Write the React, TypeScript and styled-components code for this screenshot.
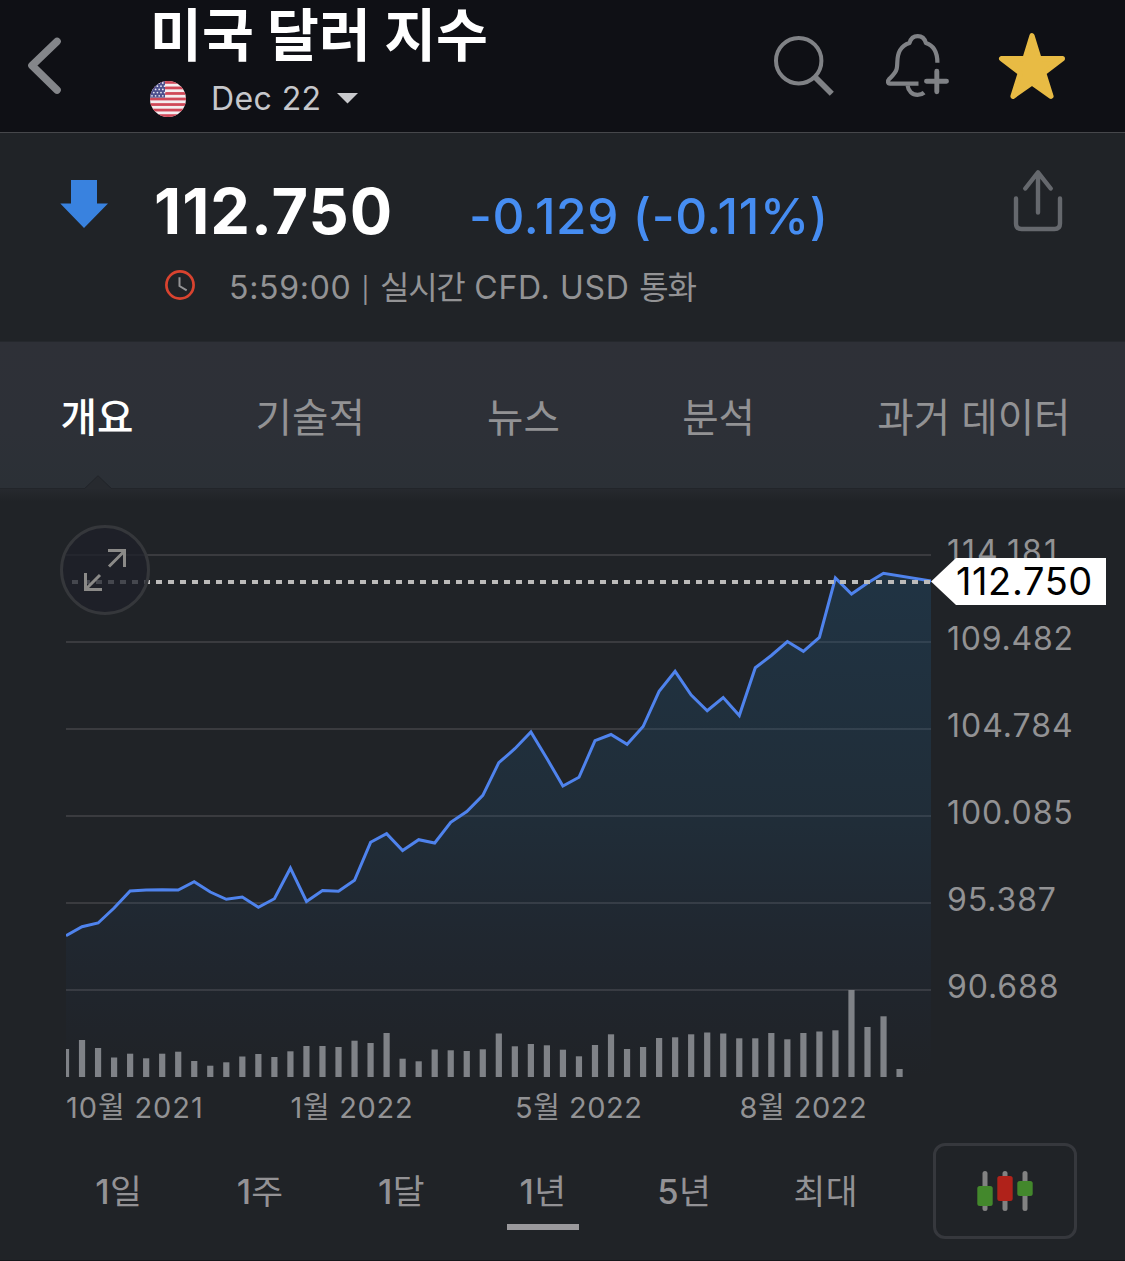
import React from "react";
import styled, { createGlobalStyle } from "styled-components";

const GlobalStyle = createGlobalStyle`
  * { box-sizing: border-box; }
  body {
    margin: 0;
    background: #202327;
    font-family: Inter, "Noto Sans CJK KR", sans-serif;
    -webkit-font-smoothing: antialiased;
  }
  button {
    margin: 0;
    padding: 0;
    border: 0;
    background: none;
    font: inherit;
    color: inherit;
  }
  svg { display: block; flex: none; }
`;

const Screen = styled.main`
  width: 1125px;
  height: 1261px;
  overflow: hidden;
  background: #202327;
  border-bottom: 1px solid #15171b;
`;

/* ---------- header ---------- */

const Header = styled.header`
  display: flex;
  height: 133px;
  padding: 0 58px 0 24px;
  background: #0f1015;
  border-bottom: 1px solid #46474b;
`;

const BackButton = styled.button`
  width: 126px;
  padding-top: 34px;
  align-self: flex-start;
`;

const Heading = styled.div`
  flex: 1;
`;

const Title = styled.h1`
  margin: 0;
  height: 70px;
  font-size: 56.4px;
  line-height: 72px;
  font-weight: 700;
  color: #fff;
  white-space: nowrap;
`;

const Contract = styled.button`
  display: flex;
  align-items: center;
  height: 58px;
  font-size: 32px;
  letter-spacing: 0.4px;
  color: #c6c7cb;
`;

const ContractName = styled.span`
  margin: -1px 16px 0 25px;
`;

const Actions = styled.div`
  display: flex;
  align-items: flex-start;
  gap: 47px;
  padding-top: 32px;
`;

/* ---------- quote ---------- */

const Quote = styled.section`
  display: flex;
  height: 208px;
  padding: 0 60px;
`;

const Direction = styled.div`
  width: 94px;
  padding-top: 47px;
`;

const QuoteBody = styled.div`
  flex: 1;
  padding-top: 38px;
`;

const PriceRow = styled.div`
  display: flex;
  align-items: baseline;
  height: 80px;
  line-height: 80px;
  white-space: nowrap;
`;

const Price = styled.span`
  width: 315px;
  font-size: 63px;
  font-weight: 700;
  letter-spacing: 1px;
  color: #fff;
`;

const Change = styled.span`
  font-size: 49.5px;
  font-weight: 500;
  letter-spacing: 0.6px;
  font-feature-settings: "calt" 0;
  color: #468df2;
`;

const Status = styled.div`
  display: flex;
  align-items: center;
  height: 40px;
  margin-top: 18px;
  padding-left: 11px;
  font-size: 32px;
  line-height: 40px;
  letter-spacing: 0.7px;
  color: #939395;
  white-space: nowrap;

  svg {
    margin-bottom: 8px;
  }
`;

const StatusText = styled.span`
  margin-left: 34px;
`;

const Hangul = styled.span`
  letter-spacing: -1.2px;
`;

const Divider = styled.span`
  font-size: 25px;
`;

const ShareButton = styled.button`
  align-self: flex-start;
  padding-top: 35px;
`;

/* ---------- tabs ---------- */

const Tabs = styled.nav`
  display: flex;
  justify-content: space-between;
  height: 148px;
  padding: 0 54.5px 0 60.5px;
  background: linear-gradient(#2e3037, #2d3037 60%, #2b3036);
  border-top: 1px solid #25282d;
  border-bottom: 1px solid #22252a;
`;

const Tab = styled.button<{ $active?: boolean }>`
  position: relative;
  height: 146px;
  font-size: 39.6px;
  line-height: 140px;
  padding-top: 6px;
  font-weight: ${(p) => (p.$active ? 500 : 400)};
  color: ${(p) => (p.$active ? "#fff" : "#929294")};
  white-space: nowrap;
`;

const TabPointer = styled.svg`
  position: absolute;
  left: 23.5px;
  bottom: -1px;
`;

/* ---------- chart ---------- */

const ChartPanel = styled.section`
  height: 642px;
  padding: 11px 0 0 66px;
  background: linear-gradient(#26292e, #202327 12px);
`;

const PlotRow = styled.div`
  position: relative;
  display: flex;
  height: 580px;
`;

const PriceAxis = styled.div`
  padding: 8px 0 0 16px;
`;

const AxisPrice = styled.div<{ $tracking: number }>`
  height: 87.1px;
  font-size: 32px;
  line-height: 87.1px;
  letter-spacing: ${(p) => p.$tracking}px;
  color: #929294;
`;

const CurrentPrice = styled.div`
  position: absolute;
  left: 865px;
  top: 58px;
  width: 175px;
  height: 47px;
  padding-left: 25px;
  background: #fff;
  clip-path: polygon(0 50%, 25px 0, 100% 0, 100% 100%, 25px 100%);
  font-size: 38px;
  line-height: 47px;
  letter-spacing: 0.6px;
  color: #000;
`;

const ExpandButton = styled.button`
  position: absolute;
  left: -6px;
  top: 25px;
  width: 90px;
  height: 90px;
  border: 3px solid #35373b;
  border-radius: 50%;
  background: rgba(30, 32, 41, 0.75);
  display: grid;
  place-items: center;
`;

const TimeAxis = styled.div`
  display: grid;
  grid-template-columns: repeat(4, 224.5px);
  height: 56px;
  font-size: 29px;
  line-height: 56px;
  color: #929294;
`;

const Month = styled.span<{ $tracking: number }>`
  letter-spacing: ${(p) => p.$tracking}px;
`;

/* ---------- range picker ---------- */

const Footer = styled.footer`
  display: flex;
  height: 130px;
  padding: 12px 48px;
`;

const Ranges = styled.div`
  display: grid;
  grid-template-columns: repeat(6, 141.4px);
  width: 885px;
`;

const Range = styled.button<{ $active?: boolean }>`
  justify-self: center;
  width: 72px;
  height: 87px;
  padding-top: 8px;
  border-bottom: 6px solid ${(p) => (p.$active ? "#9a999c" : "transparent")};
  font-size: 34.6px;
  line-height: 81px;
  font-weight: 500;
  letter-spacing: 0.3px;
  color: #939295;
  white-space: nowrap;
`;

const RangeUnit = styled.span`
  font-weight: 400;
`;

const ChartTypeButton = styled.button`
  display: grid;
  place-items: center;
  width: 144px;
  height: 96px;
  border: 3px solid #36383d;
  border-radius: 12px;
`;

/* ---------- data ---------- */

const STEP = 16.03;
const LEFT = 66;
const BASELINE = 1077;

const lineY = [
  935.7, 926.7, 923, 908, 891, 890, 889.7, 890, 881.7, 892, 899.3, 897, 907.3,
  898.7, 868.2, 901.5, 890.5, 891.3, 880.3, 842.3, 833.7, 850.5, 839.7, 843,
  822.3, 811.5, 795.3, 762.7, 748.7, 732, 758.5, 786, 777.3, 740.7, 734.5,
  744.3, 726.5, 691.3, 671.3, 695, 710.7, 697.5, 715.5, 667.7, 655.5, 641.5,
  651.3, 637.3, 578, 594, 583, 573.2,
];

const barTops = [
  1049, 1040, 1048, 1057.5, 1053.7, 1058.3, 1053.7, 1051.7, 1061, 1065.7,
  1062.3, 1056.5, 1054, 1057, 1051.3, 1046, 1046, 1047, 1040.7, 1043, 1033,
  1058.7, 1061.3, 1049.5, 1050.3, 1051, 1049.3, 1033.5, 1046.3, 1044, 1045.3,
  1049.7, 1056.3, 1045, 1034.3, 1049, 1047, 1038, 1037.3, 1034.3, 1032.5,
  1033.5, 1038.3, 1038.3, 1033, 1039.3, 1033, 1031.5, 1030.3, 990, 1027,
  1016.3, 1069,
];

const linePoints =
  lineY.map((y, i) => `${(LEFT + i * STEP).toFixed(1)},${y}`).join(" ") +
  " 931.5,581";

const gridLines = [555, 642, 729, 816, 903, 990];
const prices = [
  { value: "114.181", tracking: 2 },
  { value: "109.482", tracking: 0.75 },
  { value: "104.784", tracking: 1 },
  { value: "100.085", tracking: 0.9 },
  { value: "95.387", tracking: 0.9 },
  { value: "90.688", tracking: 0.9 },
];
const months = [
  { label: "10월 2021", tracking: 0.9 },
  { label: "1월 2022", tracking: 0.7 },
  { label: "5월 2022", tracking: 0.5 },
  { label: "8월 2022", tracking: 0.5 },
];
const ranges = [
  { count: "1", unit: "일" },
  { count: "1", unit: "주" },
  { count: "1", unit: "달" },
  { count: "1", unit: "년", active: true },
  { count: "5", unit: "년" },
  { count: "", unit: "최대" },
];
const tabs = ["개요", "기술적", "뉴스", "분석", "과거 데이터"];

/* ---------- icons ---------- */

const BackIcon = () => (
  <svg width="42" height="64" viewBox="24 34 42 64" fill="none">
    <path d="M57 41.5 32 65.5 57 90" stroke="#84868a" strokeWidth="7.6" strokeLinecap="round" strokeLinejoin="round" />
  </svg>
);

const FlagIcon = () => {
  const stripe = 36 / 13;
  const stars = [];
  for (let row = 0; row < 5; row++) {
    for (let col = 0; col < 4; col++) {
      stars.push(
        <circle key={`${row}-${col}`} cx={2 + col * 3.6 + (row % 2 ? 1.8 : 0)} cy={2 + row * 3.2} r="0.9" fill="#e4e4f0" />
      );
    }
  }
  return (
    <svg width="36" height="36" viewBox="0 0 36 36">
      <clipPath id="flag-round">
        <circle cx="18" cy="18" r="18" />
      </clipPath>
      <g clipPath="url(#flag-round)">
        <rect width="36" height="36" fill="#f4eef0" />
        {[0, 2, 4, 6, 8, 10, 12].map((n) => (
          <rect key={n} y={n * stripe} width="36" height={stripe} fill="#cf4858" />
        ))}
        <rect width="15" height={stripe * 6} fill="#4c4f8c" />
        {stars}
      </g>
    </svg>
  );
};

const CaretIcon = () => (
  <svg width="21" height="12" viewBox="0 0 21 12">
    <path d="M0 0h21L10.500 10.500z" fill="#c9cacd" />
  </svg>
);

const SearchIcon = () => (
  <svg width="65" height="68" viewBox="772 32 65 68" fill="none" stroke="#808286">
    <circle cx="798.700" cy="60.700" r="22.700" strokeWidth="4" />
    <path d="M814.500 76.500 831.800 93.800" strokeWidth="5.800" />
  </svg>
);

const BellIcon = () => (
  <svg width="66" height="68" viewBox="884 32 66 68" fill="none" stroke="#808286" strokeWidth="4.2">
    <path d="M918.500 83.600H890c-2.300 0-2.600-2.700-1-4.300 3.500-3.500 6.700-6.300 7.700-10.500 1.300-6-.5-12 3.300-18.500 2.100-3.700 5-5.900 9.500-7.300 1.200-4.300 4.400-6.800 8.200-6.800s7 2.500 8.200 6.800c8 2.500 11.500 8.500 11.500 19.700" strokeLinejoin="round" />
    <path d="M907.600 85.500c.6 5.500 4.600 9.400 9.900 9.400 2.700 0 4.900-.8 6.600-2.300" />
    <path d="M936.800 71.200v20.600M926.500 81.300h20" strokeWidth="4.900" strokeLinecap="round" />
  </svg>
);

const StarIcon = () => (
  <svg width="70" height="70" viewBox="997 32 70 70">
    <path
      d="M1032 35.700 1039 58.500 1062.400 58.700 1043.700 73 1051 96.300 1032 82.800 1013 96.300 1020.300 73 1001.600 58.700 1025 58.500z"
      fill="#e8bb44"
      stroke="#e8bb44"
      strokeWidth="5.200"
      strokeLinejoin="round"
    />
  </svg>
);

const DownIcon = () => (
  <svg width="48" height="48" viewBox="60 180 48 48">
    <path d="M71 180h26v23.400h11L84 228 60.300 203.400H71z" fill="#3982df" />
  </svg>
);

const ClockIcon = () => (
  <svg width="30" height="30" viewBox="165 270 30 30" fill="none">
    <circle cx="180" cy="285" r="13.600" stroke="#d9432f" strokeWidth="2.700" />
    <path d="M179.500 277.300v8.700l7.200 4.300" stroke="#939395" strokeWidth="2" />
  </svg>
);

const ShareIcon = () => (
  <svg width="54" height="66" viewBox="1011 168 54 66" fill="none" stroke="#65686d" strokeWidth="4.400" strokeLinecap="round" strokeLinejoin="round">
    <path d="M1016 198.500v25q0 5.500 5.500 5.500h33q5.500 0 5.500-5.500v-25M1038 173v39.500M1025.300 188.500 1038 172.300 1050.700 188.500" />
  </svg>
);

const ExpandIcon = () => (
  <svg width="84" height="84" viewBox="63 528 84 84" fill="none" stroke="#8b8a88" strokeWidth="3">
    <path d="M108 550.500h16.500V567M109 566.500l15-15M85.500 573v16.500H102M86 589l14-14" />
  </svg>
);

const CandleIcon = () => (
  <svg width="56" height="40" viewBox="977 1171 56 40">
    <g fill="#828282">
      <rect x="982.500" y="1171" width="5" height="40" rx="2.500" />
      <rect x="1002.500" y="1171" width="5" height="40" rx="2.500" />
      <rect x="1022.500" y="1171" width="5" height="40" rx="2.500" />
    </g>
    <rect x="977.300" y="1186" width="15.400" height="20" rx="2.500" fill="#43882c" />
    <rect x="997.300" y="1176" width="15.400" height="25" rx="2.500" fill="#b0221a" />
    <rect x="1017.300" y="1181" width="15.400" height="15" rx="2.500" fill="#43882c" />
  </svg>
);

const Plot = () => (
  <svg width="865" height="580" viewBox="66 500 865 580">
    <defs>
      <linearGradient id="area" gradientUnits="userSpaceOnUse" x1="0" y1="573" x2="0" y2="1077">
        <stop offset="0" stopColor="#205278" stopOpacity="0.35" />
        <stop offset="0.500" stopColor="#205278" stopOpacity="0.21" />
        <stop offset="1" stopColor="#203a70" stopOpacity="0" />
      </linearGradient>
    </defs>
    {gridLines.map((y) => (
      <rect key={y} x="66" y={y - 1} width="865" height="2" fill="#3a3b3f" />
    ))}
    <polygon points={`66,1077 ${linePoints} 931.5,1077`} fill="url(#area)" />
    {barTops.map((top, i) => (
      <rect key={i} x={LEFT + i * STEP - 3.1} y={top} width="6.200" height={BASELINE - top} fill="#7f8287" />
    ))}
    <polyline points={linePoints} fill="none" stroke="#4f83ed" strokeWidth="3" />
    <path d="M72 582H931" stroke="#bcbbba" strokeWidth="4" strokeDasharray="6 6" />
  </svg>
);

export default function App() {
  return (
    <>
      <GlobalStyle />
      <Screen>
        <Header>
          <BackButton aria-label="뒤로">
            <BackIcon />
          </BackButton>
          <Heading>
            <Title>미국 달러 지수</Title>
            <Contract>
              <FlagIcon />
              <ContractName>Dec 22</ContractName>
              <CaretIcon />
            </Contract>
          </Heading>
          <Actions>
            <SearchIcon />
            <BellIcon />
            <StarIcon />
          </Actions>
        </Header>

        <Quote>
          <Direction>
            <DownIcon />
          </Direction>
          <QuoteBody>
            <PriceRow>
              <Price>112.750</Price>
              <Change>-0.129 (-0.11%)</Change>
            </PriceRow>
            <Status>
              <ClockIcon />
              <StatusText>
                5:59:00 <Divider>|</Divider> <Hangul>실시간</Hangul> CFD. USD <Hangul>통화</Hangul>
              </StatusText>
            </Status>
          </QuoteBody>
          <ShareButton aria-label="공유">
            <ShareIcon />
          </ShareButton>
        </Quote>

        <Tabs>
          {tabs.map((name, i) => (
            <Tab key={name} $active={i === 0}>
              {name}
              {i === 0 && (
                <TabPointer width="28" height="14" viewBox="0 0 28 14">
                  <path d="M0 14 14 .8 28 14z" fill="#272a2f" />
                  <path d="M0 14 14 .8 28 14" fill="none" stroke="#22252a" strokeWidth="1" />
                </TabPointer>
              )}
            </Tab>
          ))}
        </Tabs>

        <ChartPanel>
          <PlotRow>
            <Plot />
            <PriceAxis>
              {prices.map((p) => (
                <AxisPrice key={p.value} $tracking={p.tracking}>
                  {p.value}
                </AxisPrice>
              ))}
            </PriceAxis>
            <CurrentPrice>112.750</CurrentPrice>
            <ExpandButton aria-label="확대">
              <ExpandIcon />
            </ExpandButton>
          </PlotRow>
          <TimeAxis>
            {months.map((m) => (
              <Month key={m.label} $tracking={m.tracking}>
                {m.label}
              </Month>
            ))}
          </TimeAxis>
        </ChartPanel>

        <Footer>
          <Ranges>
            {ranges.map((r) => (
              <Range key={r.count + r.unit} $active={r.active}>
                {r.count}
                <RangeUnit>{r.unit}</RangeUnit>
              </Range>
            ))}
          </Ranges>
          <ChartTypeButton aria-label="차트 유형">
            <CandleIcon />
          </ChartTypeButton>
        </Footer>
      </Screen>
    </>
  );
}
